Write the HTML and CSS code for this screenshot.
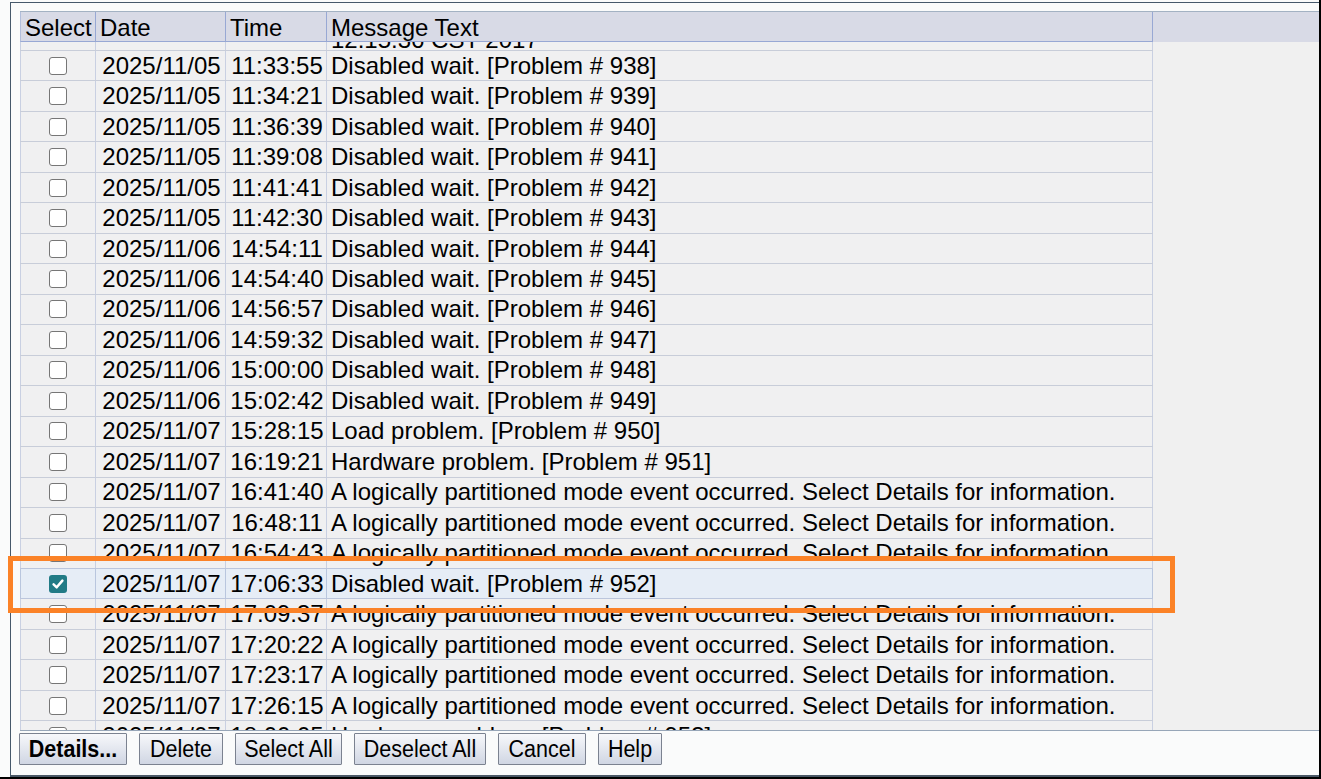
FILE: index.html
```html
<!DOCTYPE html>
<html>
<head>
<meta charset="utf-8">
<link rel="stylesheet" href="styles.css">
</head>
<body>
<div class="screen">
  <div class="panel">
    <div class="table">
      <div class="thead">
        <div class="hc c1">Select</div>
        <div class="hc c2">Date</div>
        <div class="hc c3">Time</div>
        <div class="hc c4">Message Text</div>
        <div class="hfill"></div>
      </div>
      <div class="tbody">
        <div class="rows">
          <div class="row tall">
            <div class="c c1"><span class="cb"></span></div>
            <div class="c c2">2025/11/05</div>
            <div class="c c3">10:12:03</div>
            <div class="c c4">System event occurred.<br>12:15:36 CST 2017</div>
          </div>
          <div class="row"><div class="c c1"><span class="cb"></span></div><div class="c c2">2025/11/05</div><div class="c c3">11:33:55</div><div class="c c4">Disabled wait. [Problem # 938]</div></div>
          <div class="row"><div class="c c1"><span class="cb"></span></div><div class="c c2">2025/11/05</div><div class="c c3">11:34:21</div><div class="c c4">Disabled wait. [Problem # 939]</div></div>
          <div class="row"><div class="c c1"><span class="cb"></span></div><div class="c c2">2025/11/05</div><div class="c c3">11:36:39</div><div class="c c4">Disabled wait. [Problem # 940]</div></div>
          <div class="row"><div class="c c1"><span class="cb"></span></div><div class="c c2">2025/11/05</div><div class="c c3">11:39:08</div><div class="c c4">Disabled wait. [Problem # 941]</div></div>
          <div class="row"><div class="c c1"><span class="cb"></span></div><div class="c c2">2025/11/05</div><div class="c c3">11:41:41</div><div class="c c4">Disabled wait. [Problem # 942]</div></div>
          <div class="row"><div class="c c1"><span class="cb"></span></div><div class="c c2">2025/11/05</div><div class="c c3">11:42:30</div><div class="c c4">Disabled wait. [Problem # 943]</div></div>
          <div class="row"><div class="c c1"><span class="cb"></span></div><div class="c c2">2025/11/06</div><div class="c c3">14:54:11</div><div class="c c4">Disabled wait. [Problem # 944]</div></div>
          <div class="row"><div class="c c1"><span class="cb"></span></div><div class="c c2">2025/11/06</div><div class="c c3">14:54:40</div><div class="c c4">Disabled wait. [Problem # 945]</div></div>
          <div class="row"><div class="c c1"><span class="cb"></span></div><div class="c c2">2025/11/06</div><div class="c c3">14:56:57</div><div class="c c4">Disabled wait. [Problem # 946]</div></div>
          <div class="row"><div class="c c1"><span class="cb"></span></div><div class="c c2">2025/11/06</div><div class="c c3">14:59:32</div><div class="c c4">Disabled wait. [Problem # 947]</div></div>
          <div class="row"><div class="c c1"><span class="cb"></span></div><div class="c c2">2025/11/06</div><div class="c c3">15:00:00</div><div class="c c4">Disabled wait. [Problem # 948]</div></div>
          <div class="row"><div class="c c1"><span class="cb"></span></div><div class="c c2">2025/11/06</div><div class="c c3">15:02:42</div><div class="c c4">Disabled wait. [Problem # 949]</div></div>
          <div class="row"><div class="c c1"><span class="cb"></span></div><div class="c c2">2025/11/07</div><div class="c c3">15:28:15</div><div class="c c4">Load problem. [Problem # 950]</div></div>
          <div class="row"><div class="c c1"><span class="cb"></span></div><div class="c c2">2025/11/07</div><div class="c c3">16:19:21</div><div class="c c4">Hardware problem. [Problem # 951]</div></div>
          <div class="row"><div class="c c1"><span class="cb"></span></div><div class="c c2">2025/11/07</div><div class="c c3">16:41:40</div><div class="c c4">A logically partitioned mode event occurred. Select Details for information.</div></div>
          <div class="row"><div class="c c1"><span class="cb"></span></div><div class="c c2">2025/11/07</div><div class="c c3">16:48:11</div><div class="c c4">A logically partitioned mode event occurred. Select Details for information.</div></div>
          <div class="row pre-sel"><div class="c c1"><span class="cb"></span></div><div class="c c2">2025/11/07</div><div class="c c3">16:54:43</div><div class="c c4">A logically partitioned mode event occurred. Select Details for information.</div></div>
          <div class="row sel"><div class="c c1"><span class="cb on"><svg viewBox="0 0 18 18" width="18" height="18"><path d="M4.6 9.4 L7.7 12.3 L13.4 5.6" fill="none" stroke="#ffffff" stroke-width="2.5" stroke-linecap="round" stroke-linejoin="round"/></svg></span></div><div class="c c2">2025/11/07</div><div class="c c3">17:06:33</div><div class="c c4">Disabled wait. [Problem # 952]</div></div>
          <div class="row"><div class="c c1"><span class="cb"></span></div><div class="c c2">2025/11/07</div><div class="c c3">17:09:37</div><div class="c c4">A logically partitioned mode event occurred. Select Details for information.</div></div>
          <div class="row"><div class="c c1"><span class="cb"></span></div><div class="c c2">2025/11/07</div><div class="c c3">17:20:22</div><div class="c c4">A logically partitioned mode event occurred. Select Details for information.</div></div>
          <div class="row"><div class="c c1"><span class="cb"></span></div><div class="c c2">2025/11/07</div><div class="c c3">17:23:17</div><div class="c c4">A logically partitioned mode event occurred. Select Details for information.</div></div>
          <div class="row"><div class="c c1"><span class="cb"></span></div><div class="c c2">2025/11/07</div><div class="c c3">17:26:15</div><div class="c c4">A logically partitioned mode event occurred. Select Details for information.</div></div>
          <div class="row"><div class="c c1"><span class="cb"></span></div><div class="c c2">2025/11/07</div><div class="c c3">18:00:05</div><div class="c c4">Hardware problem. [Problem # 953]</div></div>
        </div>
      </div>
    </div>
    <div class="buttons">
      <button class="btn b-details"><span class="bt">Details...</span></button>
      <button class="btn b-delete"><span class="bt">Delete</span></button>
      <button class="btn b-selall"><span class="bt">Select All</span></button>
      <button class="btn b-desel"><span class="bt">Deselect All</span></button>
      <button class="btn b-cancel"><span class="bt">Cancel</span></button>
      <button class="btn b-help"><span class="bt">Help</span></button>
    </div>
  </div>
  <div class="annot"></div>
</div>
</body>
</html>
```

FILE: styles.css
```css
html, body {
  margin: 0;
  padding: 0;
  background: #000000;
  width: 1321px;
  height: 779px;
  overflow: hidden;
}

.screen {
  position: relative;
  width: 1319px;
  height: 777px;
  box-sizing: border-box;
  padding: 2px 0 0 10px;
  background: #fafbfb;
  font-family: "Liberation Sans", Arial, sans-serif;
  color: #000000;
}

.panel {
  height: 775px;
  box-sizing: border-box;
  border-top: 1px solid #46596b;
  border-left: 1px solid #46596b;
  border-bottom: 2px solid #4a5866;
  padding-top: 8px;
  display: flex;
  flex-direction: column;
}

.table {
  margin-left: 9px;
  display: flex;
  flex-direction: column;
}

.thead {
  display: flex;
  height: 31px;
  box-sizing: border-box;
  border-top: 1px solid #a3b2c3;
  background: #d8dae6;
}

.hc {
  box-sizing: border-box;
  height: 30px;
  border-right: 1px solid #98a8d4;
  border-bottom: 1px solid #98a8d4;
  padding: 1.5px 0 0 4px;
  font-size: 24px;
  line-height: 27px;
  white-space: nowrap;
  overflow: hidden;
}

.hc.c1 { border-left: 1px solid #b2bedb; }

.hfill { flex: 1; }

.c1 { width: 76px; flex: none; }
.c2 { width: 130px; flex: none; }
.c3 { width: 101px; flex: none; }
.c4 { width: 826px; flex: none; }

.tbody {
  height: 689px;
  box-sizing: border-box;
  border-bottom: 1px solid #97a6b8;
  background: #f0f0f0;
  overflow: hidden;
}

.rows {
  width: 1133px;
  display: flex;
  flex-direction: column;
}

.row {
  display: flex;
  flex: none;
  height: 30.476px;
  box-sizing: border-box;
  border-bottom: 1px solid #c8cdd9;
  background: #f0f0f1;
  overflow: hidden;
}

.row.tall {
  height: 53px;
  margin-top: -44px;
}

.c {
  box-sizing: border-box;
  height: 100%;
  border-right: 1px solid #c9d0e2;
  padding-top: 0.7px;
  font-size: 24px;
  line-height: 27px;
  white-space: nowrap;
  overflow: hidden;
}

.c.c1 {
  border-left: 1px solid #c9d0e2;
  padding-top: 0;
  display: flex;
  align-items: center;
  justify-content: center;
}

.c.c2, .c.c3 {
  text-align: center;
  padding-left: 2px;
}

.c.c4 { padding-left: 4px; }

.row.pre-sel { border-bottom-color: #bcc6dc; }

.row.sel {
  background: #e6edf6;
  border-bottom-color: #bcc6dc;
}

.row.sel .c { border-right-color: #b9c6de; }
.row.sel .c.c1 { border-left-color: #b9c6de; }

.cb {
  display: block;
  width: 18px;
  height: 18px;
  box-sizing: border-box;
  border: 1px solid #767676;
  border-radius: 3px;
  background: #ffffff;
}

.cb.on {
  border: none;
  background: #217b86;
}

.cb svg { display: block; }

.buttons {
  display: flex;
  gap: 12px;
  padding: 2px 0 0 8px;
}

.btn {
  height: 32px;
  box-sizing: border-box;
  border: 1px solid #7b8290;
  border-radius: 1px;
  background: linear-gradient(#f7f8fb, #d0d6e3);
  font-family: "Liberation Sans", Arial, sans-serif;
  font-size: 21.5px;
  color: #000000;
  padding: 0;
  text-align: center;
  white-space: nowrap;
  margin: 0;
}

.bt {
  display: inline-block;
  transform: scaleY(1.12);
}

.b-details { width: 108px; font-weight: bold; }
.b-delete { width: 84px; }
.b-selall { width: 107px; }
.b-desel { width: 132px; }
.b-cancel { width: 88px; }
.b-help { width: 64px; }

.annot {
  position: absolute;
  left: 8px;
  top: 556px;
  width: 1167px;
  height: 57px;
  box-sizing: border-box;
  border: 5px solid #fb8227;
  pointer-events: none;
}
```
